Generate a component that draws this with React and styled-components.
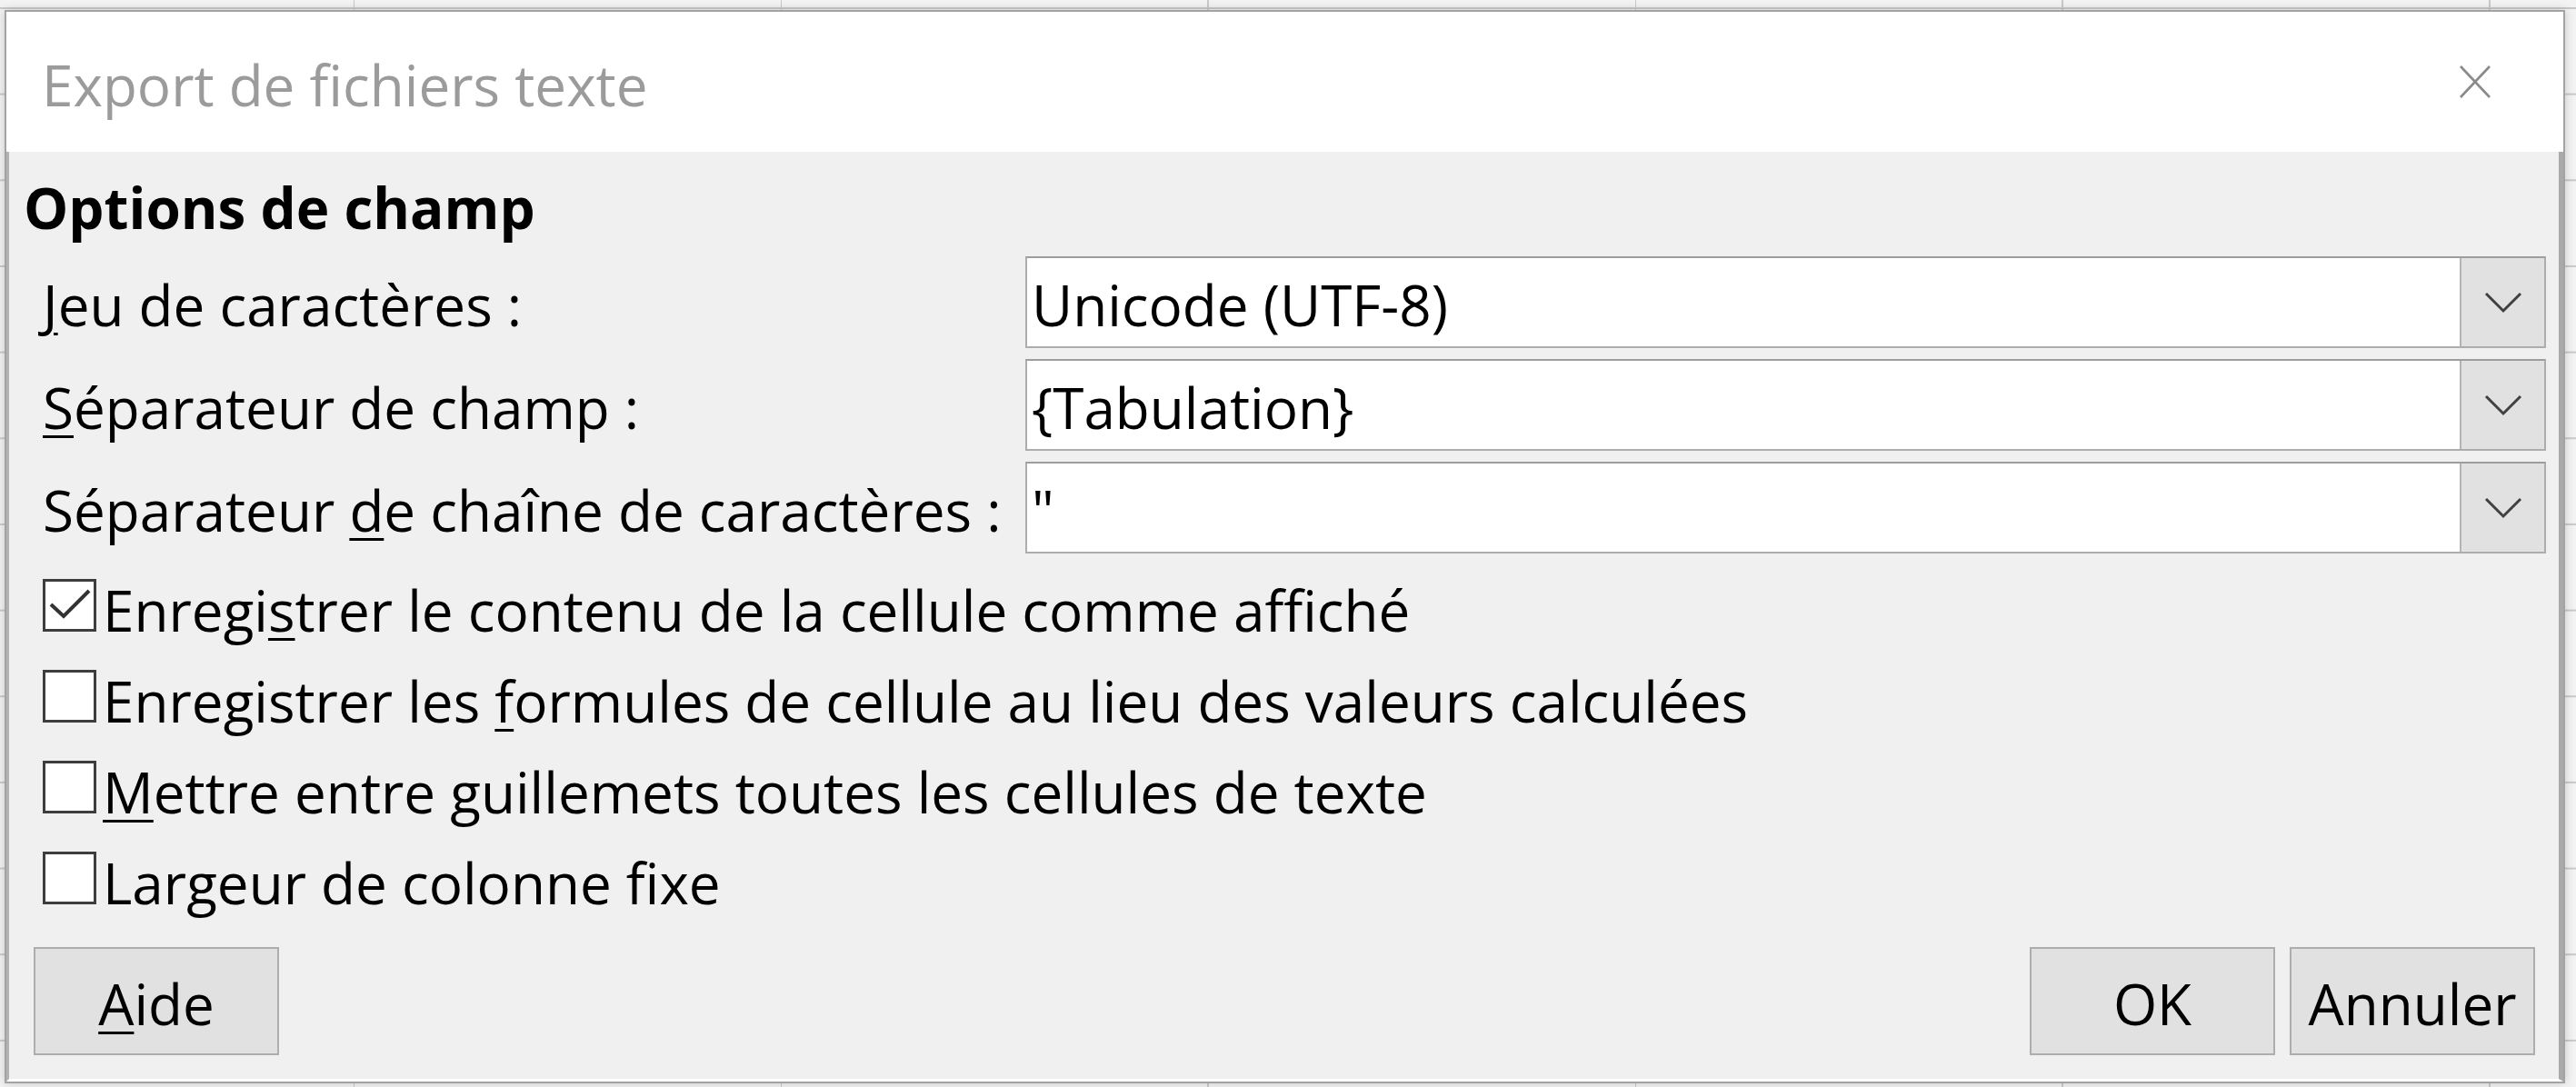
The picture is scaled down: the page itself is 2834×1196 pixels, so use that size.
import React from "react";
import styled, { createGlobalStyle } from "styled-components";

const GlobalStyle = createGlobalStyle`
  * {
    box-sizing: border-box;
  }

  html,
  body {
    margin: 0;
    padding: 0;
  }

  body {
    overflow: hidden;
    background-color: #f3f3f3;
    background-image: linear-gradient(to right, #c9c9c9 2px, transparent 2px),
      linear-gradient(to bottom, #c9c9c9 2px, transparent 2px);
    background-size: 470px 94.67px;
    background-position: 388px 8px;
    font-family: "Open Sans", "Noto Sans", sans-serif;
    color: #000;
  }
`;

const charsets = [
  { label: [null, "J", "eu de caractères :"], value: "Unicode (UTF-8)" },
  { label: [null, "S", "éparateur de champ :"], value: "{Tabulation}" },
  {
    label: ["Séparateur ", "d", "e chaîne de caractères :"],
    value: '"',
  },
];

const options = [
  {
    text: ["Enregi", "s", "trer le contenu de la cellule comme affiché"],
    checked: true,
  },
  {
    text: ["Enregistrer les ", "f", "ormules de cellule au lieu des valeurs calculées"],
    checked: false,
  },
  {
    text: [null, "M", "ettre entre guillemets toutes les cellules de texte"],
    checked: false,
  },
  { text: ["Largeur de colonne f", "i", "xe"], checked: false },
];

// label text with one underlined access key
const Mnemonic = ({ parts }) => (
  <span>
    {parts[0]}
    <Key>{parts[1]}</Key>
    {parts[2]}
  </span>
);

const App = () => {
  return (
    <>
      <GlobalStyle />
      <Page>
        <Dialog>
          <TitleBar>
            <Title>Export de fichiers texte</Title>
            <CloseIcon width="36" height="38" viewBox="0 0 36 38">
              <line x1="2" y1="2" x2="34" y2="36" />
              <line x1="34" y1="2" x2="2" y2="36" />
            </CloseIcon>
          </TitleBar>
          <Body>
            <Heading>Options de champ</Heading>
            <Fields>
              {charsets.map((row) => (
                <React.Fragment key={row.value}>
                  <Label>
                    <Mnemonic parts={row.label} />
                  </Label>
                  <Combo>
                    <ComboValue>{row.value}</ComboValue>
                    <DropButton>
                      <svg width="42" height="24" viewBox="0 0 42 24">
                        <polyline points="2,2 21,21 40,2" />
                      </svg>
                    </DropButton>
                  </Combo>
                </React.Fragment>
              ))}
            </Fields>
            <Checks>
              {options.map((opt) => (
                <CheckRow key={opt.text.join("")}>
                  <CheckBox>
                    {opt.checked && (
                      <svg width="53" height="52" viewBox="0 0 53 52">
                        <polyline points="6,25 20,38 48,10" />
                      </svg>
                    )}
                  </CheckBox>
                  <CheckText>
                    <Mnemonic parts={opt.text} />
                  </CheckText>
                </CheckRow>
              ))}
            </Checks>
            <ButtonBar>
              <Button>
                <Mnemonic parts={[null, "A", "ide"]} />
              </Button>
              <Spacer />
              <Button>OK</Button>
              <Button>Annuler</Button>
            </ButtonBar>
          </Body>
        </Dialog>
      </Page>
    </>
  );
};

const Page = styled.div`
  width: 2834px;
  height: 1196px;
  padding: 11px 0 0 5px;
`;

const Dialog = styled.div`
  width: 2817px;
  border: 2px solid #a3a3a3;
  background: #f0f0f0;
  box-shadow: 0 0 10px rgba(0, 0, 0, 0.18);
`;

const TitleBar = styled.div`
  height: 154px;
  display: flex;
  align-items: center;
  justify-content: space-between;
  padding: 0 79px 0 39px;
  background: #fff;
`;

const Title = styled.div`
  font-size: 62px;
  line-height: 1;
  padding-top: 6px;
  color: #9b9b9b;
`;

const CloseIcon = styled.svg`
  line {
    stroke: #8a8a8a;
    stroke-width: 2.6;
  }
`;

const Body = styled.div`
  border-left: 3px solid #b2b2b2;
  border-right: 5px solid #a9a9a9;
  border-bottom: 3px solid #fff;
  padding: 11px 14px 26px 16px;
`;

const Heading = styled.div`
  height: 100px;
  display: flex;
  align-items: center;
  margin-bottom: 4px;
  font-size: 62px;
  font-weight: 700;
  line-height: 1;
`;

const Fields = styled.div`
  display: grid;
  grid-template-columns: 1081px 1fr;
  grid-auto-rows: 101px;
  row-gap: 12px;
  padding-left: 21px;
`;

const Label = styled.div`
  display: flex;
  align-items: center;
  padding-top: 4px;
  font-size: 62px;
  line-height: 1;
  white-space: nowrap;
`;

const Key = styled.u`
  text-decoration-thickness: 3px;
  text-underline-offset: 7px;
`;

const Combo = styled.div`
  display: flex;
  border: 2px solid #abadb0;
  border-top-color: #9a9ea3;
  background: #fff;
`;

const ComboValue = styled.div`
  flex: 1;
  display: flex;
  align-items: center;
  padding: 4px 0 0 5px;
  font-size: 62px;
  line-height: 1;
`;

const DropButton = styled.div`
  width: 93px;
  display: flex;
  align-items: center;
  justify-content: center;
  border-left: 2px solid #b4b4b4;
  background: #e1e1e1;

  polyline {
    fill: none;
    stroke: #404040;
    stroke-width: 3;
  }
`;

const Checks = styled.div`
  margin-top: 7px;
  padding-left: 21px;
`;

const CheckRow = styled.div`
  height: 100px;
  display: flex;
  align-items: center;
  gap: 7px;
`;

const CheckBox = styled.div`
  width: 59px;
  height: 58px;
  border: 3px solid #3d3d3d;
  background: #fff;

  svg {
    display: block;
  }

  polyline {
    fill: none;
    stroke: #333;
    stroke-width: 4;
  }
`;

const CheckText = styled.div`
  padding-top: 10px;
  font-size: 62px;
  line-height: 1;
  white-space: nowrap;
`;

const ButtonBar = styled.div`
  display: flex;
  gap: 16px;
  margin-top: 26px;
  padding: 0 12px 0 11px;
`;

const Spacer = styled.div`
  flex: 1;
`;

const Button = styled.div`
  width: 270px;
  height: 119px;
  display: flex;
  align-items: center;
  justify-content: center;
  padding-top: 5px;
  border: 2px solid #adadad;
  background: #e1e1e1;
  font-size: 62px;
  line-height: 1;
`;

export default App;
